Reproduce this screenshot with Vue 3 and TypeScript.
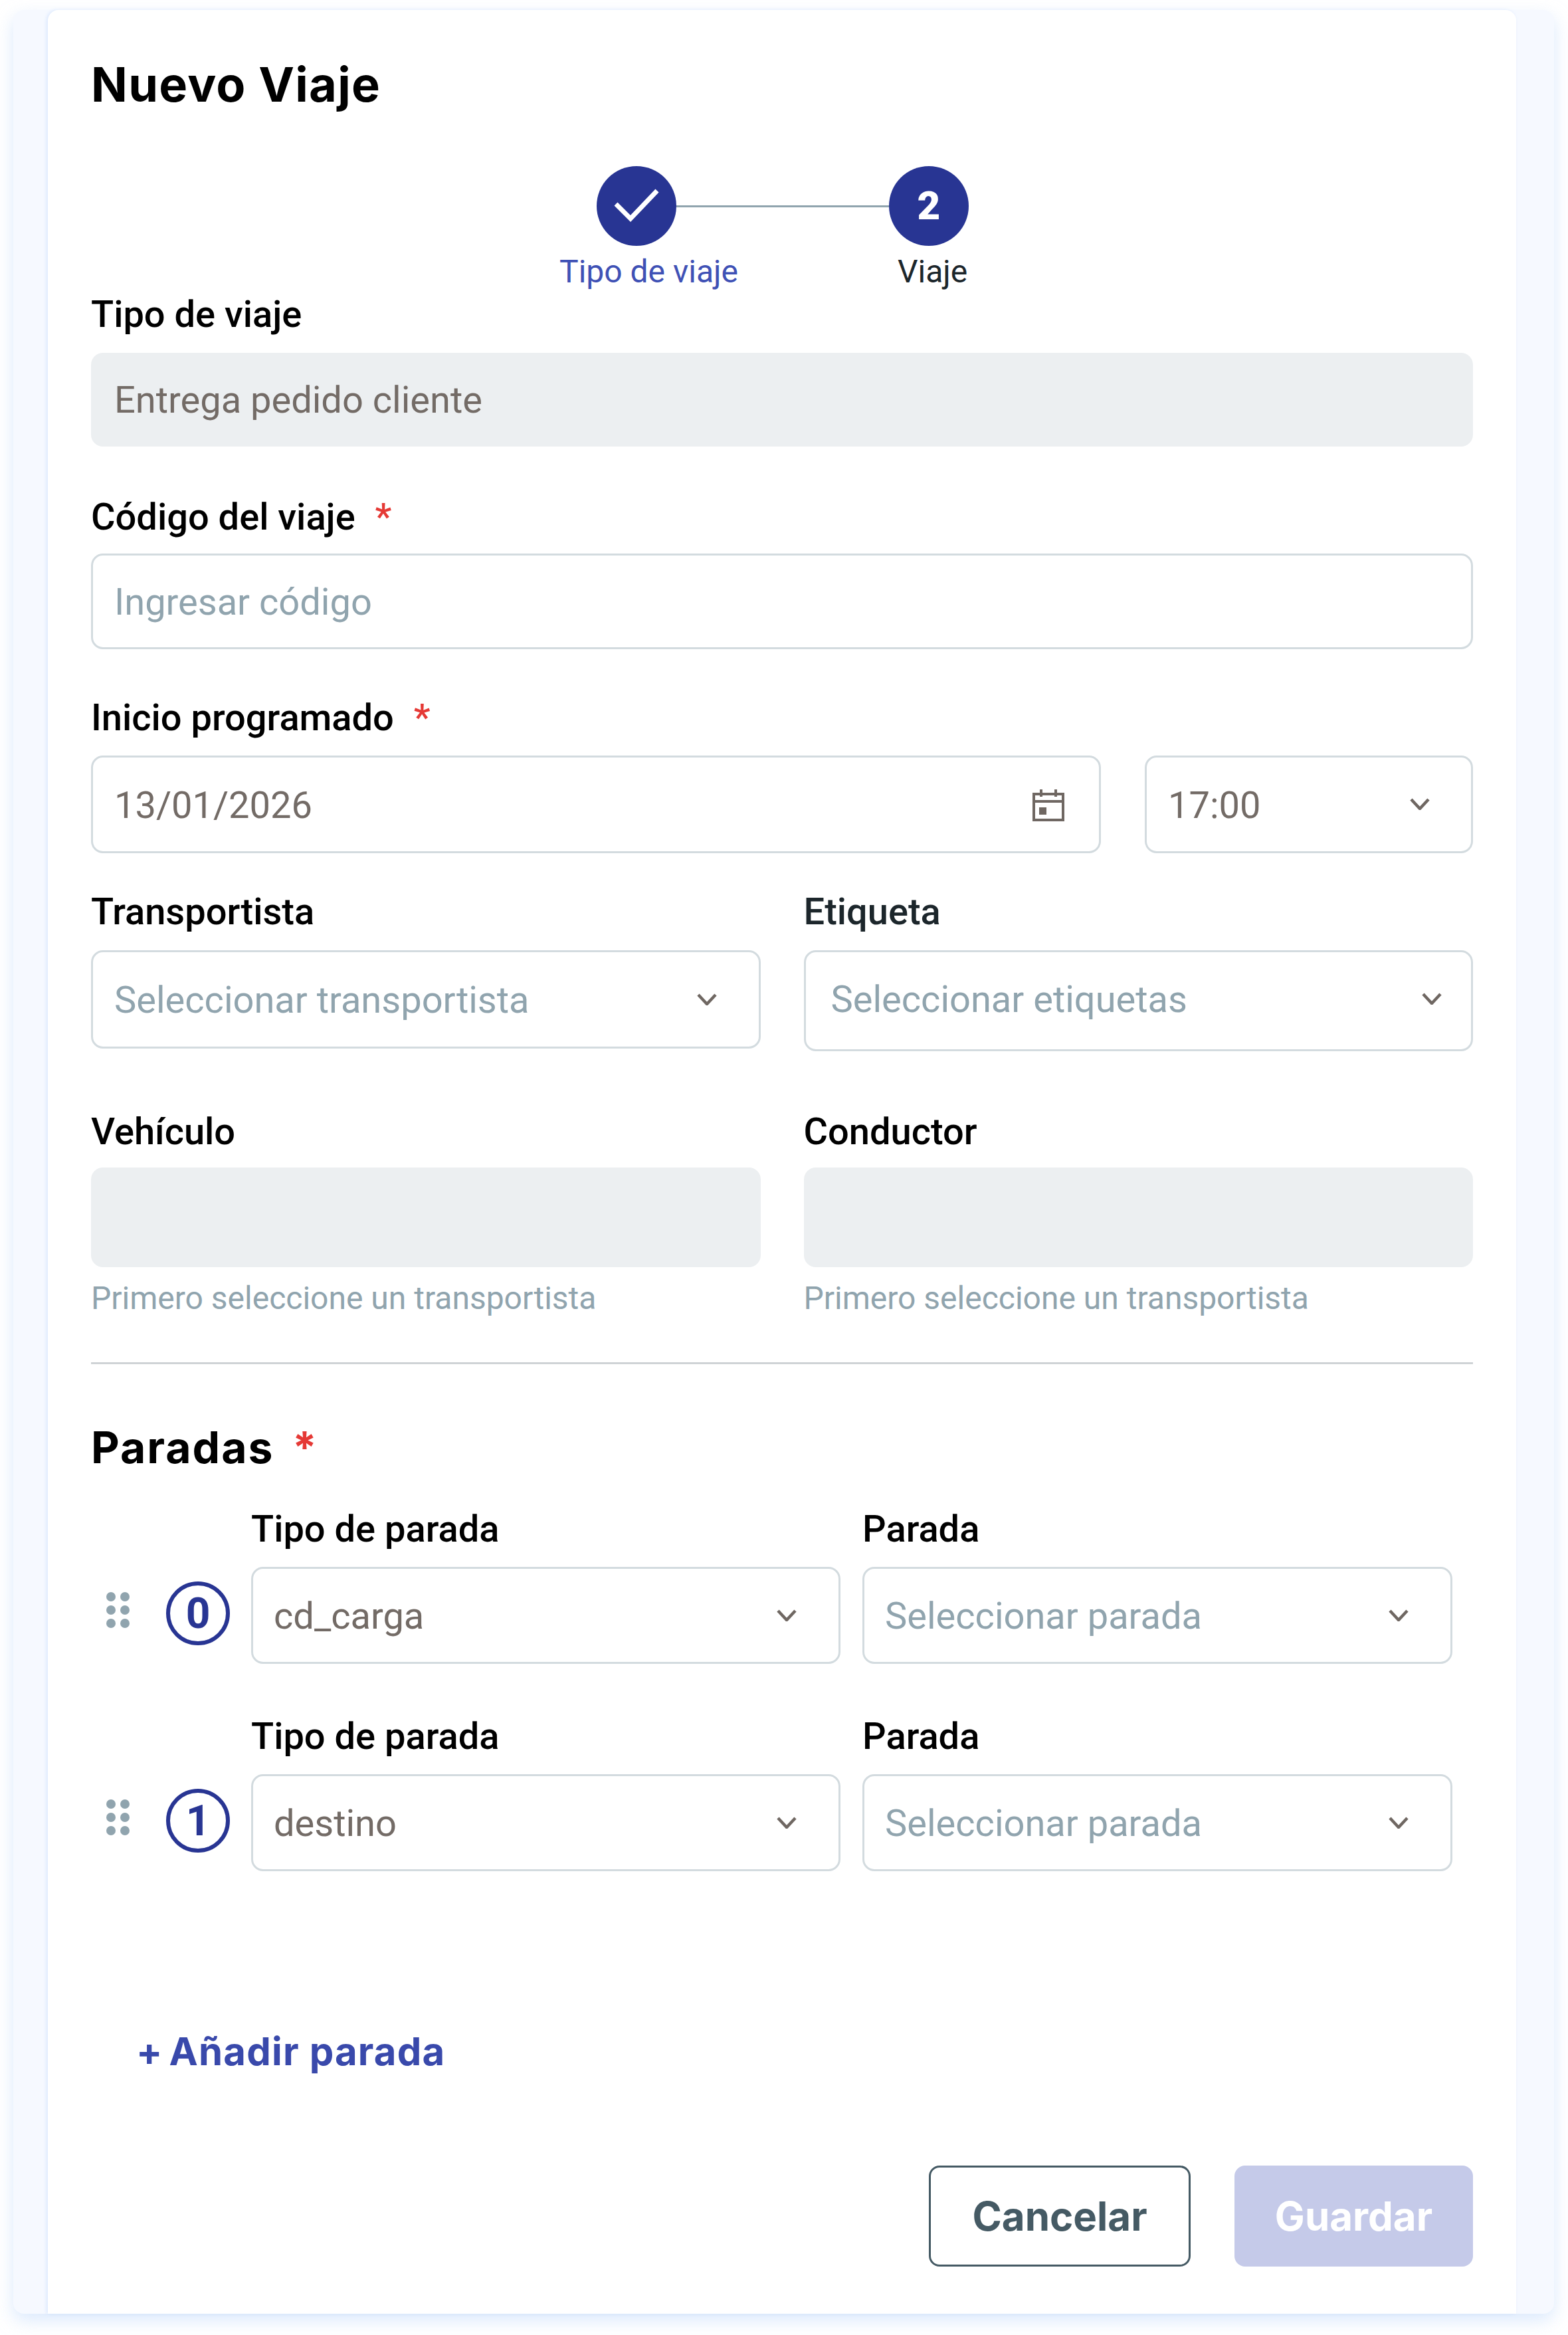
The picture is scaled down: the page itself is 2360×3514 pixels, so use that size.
<script setup lang="ts">
const stops = [
  { index: 0, value: 'cd_carga' },
  { index: 1, value: 'destino' },
]
const dots = [
  [7, 7], [28, 7], [7, 27], [28, 27], [7, 47], [28, 47],
]
</script>

<template>
  <div class="page">
    <div class="panel">
      <main class="sheet">
        <h1 class="title">Nuevo Viaje</h1>

        <div class="stepper">
          <div class="circle">
            <svg class="check" width="68" height="50" viewBox="0 0 68 50" fill="none">
              <path d="M3 23 L25 45 L65 3" stroke="#fff" stroke-width="7" />
            </svg>
          </div>
          <div class="connector"></div>
          <div class="circle number">2</div>
        </div>
        <div class="step-labels">
          <span class="step-done">Tipo de viaje</span>
          <span class="step-current">Viaje</span>
        </div>

        <label class="label">Tipo de viaje</label>
        <div class="box disabled h141"><span class="value">Entrega pedido cliente</span></div>

        <label class="label gap78">Código del viaje <em>*</em></label>
        <div class="box h144"><span class="placeholder">Ingresar código</span></div>

        <label class="label gap75">Inicio programado <em>*</em></label>
        <div class="row date-row">
          <div class="box date">
            <span class="value">13/01/2026</span>
            <svg class="calendar" width="48" height="48" viewBox="0 0 48 48" fill="none" stroke="#6f6762" stroke-width="4">
              <rect x="2" y="7" width="44" height="39" />
              <path d="M2 18 H46 M13 0 V11 M35 0 V11" />
              <rect x="10" y="27" width="11" height="11" fill="#6f6762" stroke="none" />
            </svg>
          </div>
          <div class="box time">
            <span class="value">17:00</span>
            <svg class="chevron" width="30" height="18" viewBox="0 0 30 18" fill="none"><path d="M2 2 L15 16 L28 2" /></svg>
          </div>
        </div>

        <div class="row two gap60">
          <div>
            <label class="label">Transportista</label>
            <div class="box select h148">
              <span class="placeholder">Seleccionar transportista</span>
              <svg class="chevron" width="30" height="18" viewBox="0 0 30 18" fill="none"><path d="M2 2 L15 16 L28 2" /></svg>
            </div>
          </div>
          <div>
            <label class="label soft">Etiqueta</label>
            <div class="box select tags h152">
              <span class="placeholder">Seleccionar etiquetas</span>
              <svg class="chevron" width="30" height="18" viewBox="0 0 30 18" fill="none"><path d="M2 2 L15 16 L28 2" /></svg>
            </div>
          </div>
        </div>

        <div class="row two gap93">
          <div>
            <label class="label short">Vehículo</label>
            <div class="box disabled h150"></div>
            <p class="hint">Primero seleccione un transportista</p>
          </div>
          <div>
            <label class="label short">Conductor</label>
            <div class="box disabled h150"></div>
            <p class="hint">Primero seleccione un transportista</p>
          </div>
        </div>

        <hr class="divider" />

        <h2 class="section">Paradas <em>*</em></h2>

        <div v-for="stop in stops" :key="stop.index" class="stop">
          <svg class="grip" width="35" height="54" viewBox="0 0 35 54">
            <circle v-for="(d, i) in dots" :key="i" :cx="d[0]" :cy="d[1]" r="7" fill="#90a4ae" />
          </svg>
          <div class="badge">{{ stop.index }}</div>
          <div class="stop-field type">
            <label class="label">Tipo de parada</label>
            <div class="box select stop-box">
              <span class="value">{{ stop.value }}</span>
              <svg class="chevron" width="30" height="18" viewBox="0 0 30 18" fill="none"><path d="M2 2 L15 16 L28 2" /></svg>
            </div>
          </div>
          <div class="stop-field place">
            <label class="label">Parada</label>
            <div class="box select stop-box">
              <span class="placeholder">Seleccionar parada</span>
              <svg class="chevron" width="30" height="18" viewBox="0 0 30 18" fill="none"><path d="M2 2 L15 16 L28 2" /></svg>
            </div>
          </div>
        </div>

        <button class="add"><span class="plus">+</span> Añadir parada</button>

        <div class="actions">
          <button class="btn cancel">Cancelar</button>
          <button class="btn save" disabled>Guardar</button>
        </div>
      </main>
    </div>
  </div>
</template>

<style>
html, body { margin: 0; background: #fff; }
</style>

<style scoped>
.page {
  width: 2360px;
  height: 3514px;
  padding: 15px 21px 32px 20px;
  box-sizing: border-box;
  font-family: Roboto, "Liberation Sans", sans-serif;
  overflow: hidden;
}
.panel {
  height: 100%;
  background: #f6f9ff;
  border-radius: 16px;
  box-shadow: 0 10px 26px rgba(190, 215, 250, 0.55);
  padding: 0 57px 0 52px;
}
.sheet {
  height: 100%;
  background: #fff;
  border-radius: 16px 16px 0 0;
  padding: 0 65px;
  box-shadow: -2px 0 5px rgba(200, 220, 252, 0.6);
}
.title {
  margin: 0;
  padding-top: 72px;
  font: 700 72px/80px Inter, sans-serif;
  color: #000;
  letter-spacing: 1.3px;
}
.stepper {
  display: flex;
  align-items: center;
  margin: 83px 0 0 761px;
}
.circle {
  width: 120px;
  height: 120px;
  border-radius: 50%;
  background: #283593;
  display: flex;
  align-items: center;
  justify-content: center;
}
.check { margin-top: -3px; }
.number {
  color: #fff;
  font: 900 60px/1 Roboto, sans-serif;
}
.connector {
  width: 320px;
  height: 3px;
  background: #90a4ae;
}
.step-labels {
  display: flex;
  gap: 240px;
  margin: 11px 0 8px 705px;
  font-size: 48px;
  line-height: 56px;
}
.step-done { color: #3f51b5; }
.step-current { color: #1c262b; }
.label {
  display: block;
  height: 56px;
  margin-bottom: 30px;
  font-size: 56px;
  font-weight: 500;
  line-height: 56px;
  color: #000;
}
.label em, .section em {
  font-style: normal;
  color: #e53935;
  margin-left: 16px;
}
.label.soft { color: #1c262b; }
.label.short { margin-bottom: 26px; }
.gap78 { margin-top: 78px; margin-bottom: 27px; }
.gap75 { margin-top: 75px; margin-bottom: 29px; }
.gap60 { margin-top: 60px; }
.gap93 { margin-top: 93px; }
.box {
  box-sizing: border-box;
  border: 3px solid #d3dbdf;
  border-radius: 18px;
  padding: 2px 32px 0;
  display: flex;
  align-items: center;
  justify-content: space-between;
  font-size: 56px;
  background: #fff;
}
.disabled {
  border: 0;
  background: #eceff1;
  padding: 0 35px;
}
.h141 { height: 141px; }
.h144 { height: 144px; }
.h148 { height: 148px; }
.h150 { height: 150px; }
.h152 { height: 152px; }
.value { color: #736b66; }
.placeholder { color: #90a4ae; }
.row { display: flex; }
.date-row { gap: 66px; }
.two { gap: 65px; }
.two > div { flex: 1 1 0; min-width: 0; }
.date { width: 1520px; height: 147px; padding-right: 52px; }
.time { width: 494px; height: 147px; padding-right: 62px; }
.select { padding-right: 63px; }
.tags { padding-left: 38px; padding-right: 44px; padding-top: 0; padding-bottom: 4px; }
.chevron { margin-top: -3px; }
.chevron path {
  stroke: #6f6762;
  stroke-width: 4.5;
}
.hint {
  margin: 19px 0 0;
  height: 56px;
  font-size: 48px;
  line-height: 56px;
  color: #90a4ae;
}
.divider {
  margin: 68px 0 0;
  border: 0;
  height: 3px;
  background: #cfd3d6;
}
.section {
  margin: 85px 0 0;
  height: 80px;
  font: 700 66px/80px Inter, sans-serif;
  letter-spacing: 2px;
  color: #000;
}
.section em { margin-left: 10px; }
.stop {
  display: flex;
  align-items: flex-start;
  margin-top: 81px;
  padding-left: 23px;
}
.section + .stop { margin-top: 55px; }
.grip { margin-top: 123px; flex: none; }
.badge {
  box-sizing: border-box;
  flex: none;
  width: 96px;
  height: 96px;
  margin: 107px 0 0 55px;
  border: 6px solid #283593;
  border-radius: 50%;
  color: #283593;
  font-size: 64px;
  font-weight: 700;
  display: flex;
  align-items: center;
  justify-content: center;
}
.stop-field .label { margin-bottom: 29px; }
.stop-field.type { width: 887px; margin-left: 32px; }
.stop-field.place { width: 888px; margin-left: 33px; }
.stop-box { height: 146px; padding-left: 31px; }
.add {
  display: block;
  margin: 236px 0 0 68px;
  padding: 0;
  height: 70px;
  border: 0;
  background: none;
  font: 700 58px/70px Inter, sans-serif;
  letter-spacing: 1.2px;
  color: #3949ab;
}
.plus { margin-right: -6px; }
.actions {
  display: flex;
  justify-content: flex-end;
  gap: 66px;
  margin-top: 137px;
}
.btn {
  height: 152px;
  box-sizing: border-box;
  border-radius: 16px;
  font: 700 60px/1 Inter, sans-serif;
}
.cancel {
  width: 394px;
  background: #fff;
  border: 3px solid #455a64;
  color: #455a64;
}
.save {
  width: 359px;
  background: #c5cae9;
  border: 0;
  color: #fff;
}
</style>
